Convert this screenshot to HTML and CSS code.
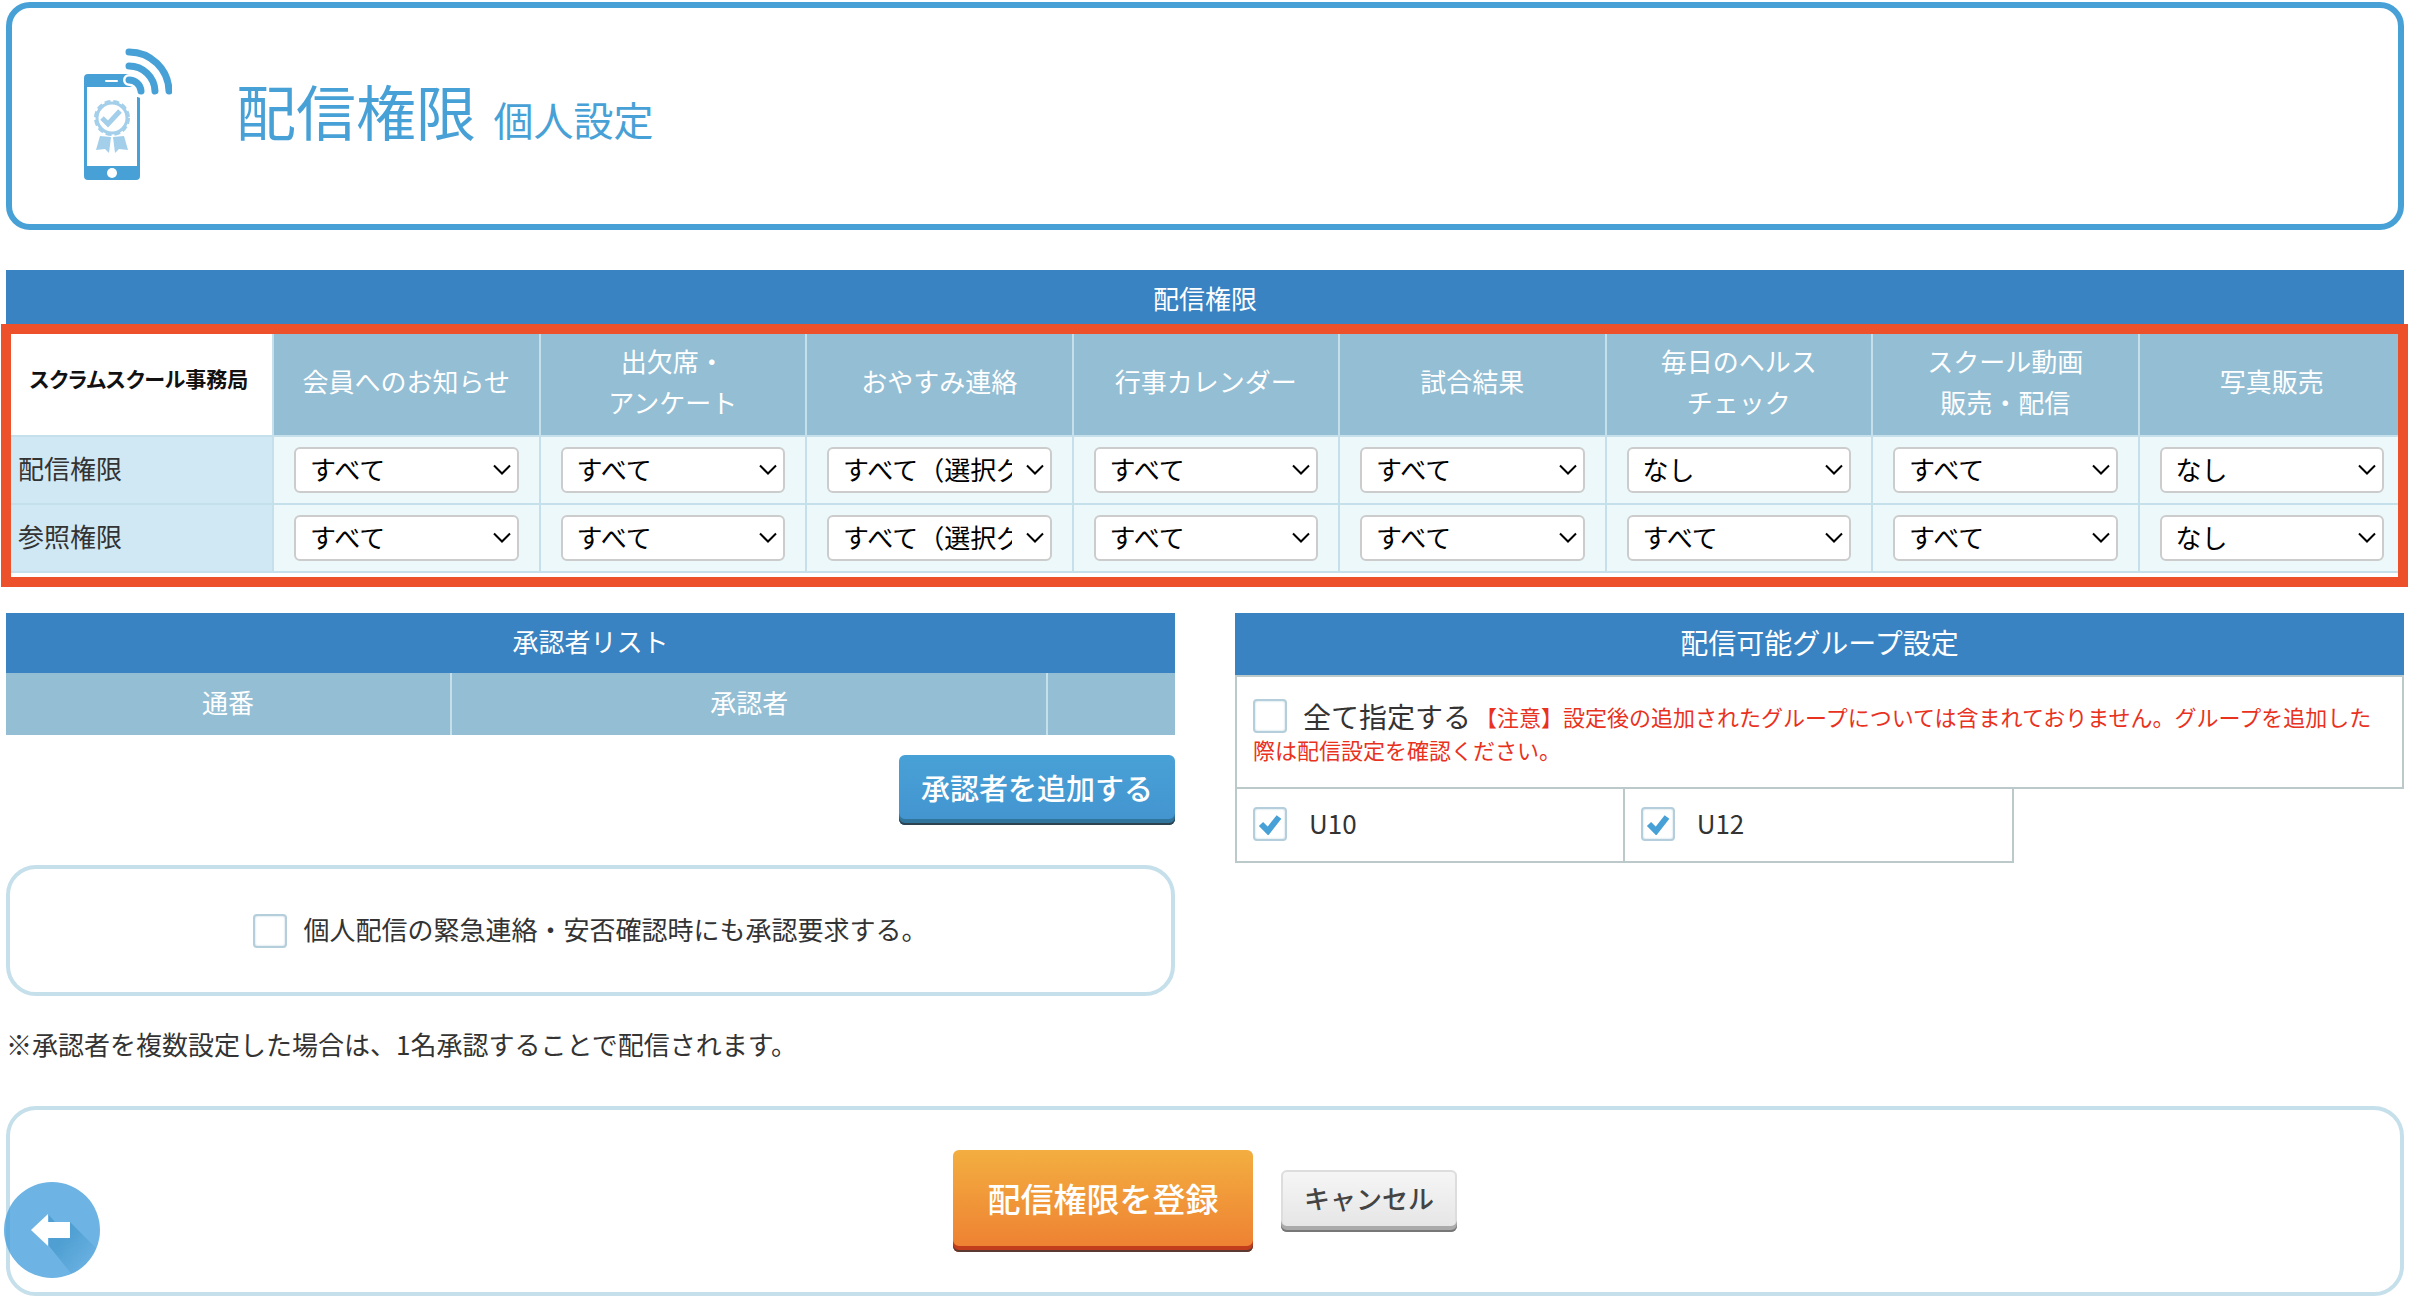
FILE: index.html
```
<!DOCTYPE html>
<html lang="ja">
<head>
<meta charset="utf-8">
<meta name="viewport" content="width=device-width, initial-scale=1">
<title>配信権限 個人設定</title>
<link rel="stylesheet" href="styles.css">
</head>
<body>
<main class="page">
  <header class="page-header">
    <svg class="page-icon" viewBox="0 0 88 132" aria-hidden="true">
      <rect x="0" y="26" width="56" height="106" rx="4" fill="#48a1d6"/>
      <rect x="3" y="39" width="50" height="79" fill="#fff"/>
      <path d="M22 33h11" stroke="#fff" stroke-width="2" stroke-linecap="round"/>
      <circle cx="28" cy="125" r="5" fill="#fff"/>
      <path d="M46 25h12v24h-9z" fill="#fff"/>
      <path d="M45 32a12 12 0 0 1 12 12" fill="none" stroke="#fff" stroke-width="12" stroke-linecap="round"/>
      <g fill="none" stroke="#48a1d6" stroke-width="7" stroke-linecap="round">
        <path d="M45 32a12 12 0 0 1 12 11"/>
        <path d="M45 18a26 26 0 0 1 26 25"/>
        <path d="M45 4a40 40 0 0 1 40 39"/>
      </g>
      <circle cx="28" cy="70" r="15" fill="none" stroke="#a3cfea" stroke-width="3"/>
      <circle cx="28" cy="70" r="17" fill="none" stroke="#a3cfea" stroke-width="2" stroke-dasharray="6 3"/>
      <path d="M18 70l6 6 12-13" fill="none" stroke="#a3cfea" stroke-width="5"/>
      <path d="M16 88l11 1-2 16-4-4-9 1zM40 88l-11 1 2 16 4-4 9 1z" fill="#a3cfea"/>
    </svg>
    <h1 class="page-title">配信権限 <span class="page-subtitle">個人設定</span></h1>
  </header>

  <section class="permissions">
    <table class="perm-table">
      <colgroup><col class="col-owner"><col span="8"></colgroup>
      <thead>
        <tr><th class="bar" colspan="9">配信権限</th></tr>
        <tr>
          <th class="owner" scope="col">スクラムスクール事務局</th>
          <th scope="col">会員へのお知らせ</th>
          <th scope="col">出欠席・<br>アンケート</th>
          <th scope="col">おやすみ連絡</th>
          <th scope="col">行事カレンダー</th>
          <th scope="col">試合結果</th>
          <th scope="col">毎日のヘルス<br>チェック</th>
          <th scope="col">スクール動画<br>販売・配信</th>
          <th scope="col">写真販売</th>
        </tr>
      </thead>
      <tbody>
        <tr>
          <th scope="row">配信権限</th>
          <td><select aria-label="配信権限 会員へのお知らせ"><option>すべて</option><option>なし</option></select></td>
          <td><select aria-label="配信権限 出欠席・アンケート"><option>すべて</option><option>なし</option></select></td>
          <td><select aria-label="配信権限 おやすみ連絡"><option>すべて（選択グループ）</option><option>なし</option></select></td>
          <td><select aria-label="配信権限 行事カレンダー"><option>すべて</option><option>なし</option></select></td>
          <td><select aria-label="配信権限 試合結果"><option>すべて</option><option>なし</option></select></td>
          <td><select aria-label="配信権限 毎日のヘルスチェック"><option>なし</option><option>すべて</option></select></td>
          <td><select aria-label="配信権限 スクール動画販売・配信"><option>すべて</option><option>なし</option></select></td>
          <td><select aria-label="配信権限 写真販売"><option>なし</option><option>すべて</option></select></td>
        </tr>
        <tr>
          <th scope="row">参照権限</th>
          <td><select aria-label="参照権限 会員へのお知らせ"><option>すべて</option><option>なし</option></select></td>
          <td><select aria-label="参照権限 出欠席・アンケート"><option>すべて</option><option>なし</option></select></td>
          <td><select aria-label="参照権限 おやすみ連絡"><option>すべて（選択グループ）</option><option>なし</option></select></td>
          <td><select aria-label="参照権限 行事カレンダー"><option>すべて</option><option>なし</option></select></td>
          <td><select aria-label="参照権限 試合結果"><option>すべて</option><option>なし</option></select></td>
          <td><select aria-label="参照権限 毎日のヘルスチェック"><option>すべて</option><option>なし</option></select></td>
          <td><select aria-label="参照権限 スクール動画販売・配信"><option>すべて</option><option>なし</option></select></td>
          <td><select aria-label="参照権限 写真販売"><option>なし</option><option>すべて</option></select></td>
        </tr>
      </tbody>
    </table>
    <div class="highlight"></div>
  </section>

  <div class="columns">
    <section class="approvers">
      <table class="approver-table">
        <colgroup><col class="col-no"><col class="col-name"><col></colgroup>
        <thead>
          <tr><th class="bar" colspan="3">承認者リスト</th></tr>
          <tr><th scope="col">通番</th><th scope="col">承認者</th><td></td></tr>
        </thead>
      </table>
      <button class="btn btn-add" type="button">承認者を追加する</button>
      <div class="panel option-panel">
        <input type="checkbox" id="urgent">
        <label for="urgent">個人配信の緊急連絡・安否確認時にも承認要求する。</label>
      </div>
      <p class="note">※承認者を複数設定した場合は、1名承認することで配信されます。</p>
    </section>

    <section class="groups">
      <table class="group-table">
        <thead>
          <tr><th class="bar" colspan="3">配信可能グループ設定</th></tr>
        </thead>
        <tbody>
          <tr>
            <td class="all-cell" colspan="3"><input type="checkbox" id="all"><label class="all-label" for="all">全て指定する</label><span class="caution">【注意】設定後の追加されたグループについては含まれておりません。グループを追加した際は配信設定を確認ください。</span></td>
          </tr>
          <tr>
            <td><div class="group-item"><input type="checkbox" id="u10" checked><label for="u10">U10</label></div></td>
            <td><div class="group-item"><input type="checkbox" id="u12" checked><label for="u12">U12</label></div></td>
          </tr>
        </tbody>
      </table>
    </section>
  </div>

  <footer class="panel actions">
    <button class="btn btn-submit" type="submit">配信権限を登録</button>
    <button class="btn btn-cancel" type="button">キャンセル</button>
  </footer>
</main>

<a class="back" href="#" aria-label="戻る">
  <svg viewBox="0 0 96 96" aria-hidden="true">
    <defs>
      <clipPath id="disc"><circle cx="48" cy="48" r="48"/></clipPath>
      <linearGradient id="shade" x1="0" y1="0" x2="1" y2="1">
        <stop offset=".3" stop-color="#4f9fd2"/>
        <stop offset=".8" stop-color="#4f9fd2" stop-opacity="0"/>
      </linearGradient>
    </defs>
    <circle cx="48" cy="48" r="48" fill="#48a0dc" fill-opacity=".8"/>
    <path d="M45 33l6 7h15l34 34-26 26-29-36z" fill="url(#shade)" clip-path="url(#disc)"/>
    <path d="M27 48l17-16v8h22v16H44v8z" fill="#fff"/>
  </svg>
</a>
</body>
</html>
```
FILE: styles.css
```
* {
  box-sizing: border-box;
}

body {
  margin: 0;
  background: #fff;
  color: #333;
  font-family: "Noto Sans CJK JP", sans-serif;
  font-size: 26px;
  line-height: 40px;
}

.page {
  padding: 2px 16px 8px 6px;
}

/* Header */
.page-header {
  display: flex;
  align-items: flex-start;
  gap: 64px;
  min-height: 228px;
  padding: 40px 72px;
  border: 6px solid #48a1d6;
  border-radius: 24px;
}

.page-icon {
  flex: none;
  width: 88px;
  height: 132px;
}

.page-title {
  margin: 0;
  padding-top: 12px;
  color: #48a1d6;
  font-size: 60px;
  font-weight: 400;
  line-height: 100px;
}

.page-subtitle {
  margin-left: 4px;
  font-size: 40px;
}

/* Tables */
table {
  width: 100%;
  border-spacing: 0;
  table-layout: fixed;
}

th,
td {
  padding: 0 0 4px;
  font-weight: 400;
}

.bar {
  height: 60px;
  background: #3983c2;
  color: #fff;
}

.permissions {
  position: relative;
  margin-top: 40px;
}

.col-owner {
  width: 266px;
}

.perm-table tr + tr th,
.perm-table td {
  border-bottom: 2px solid #c5dfeb;
}

.perm-table tr + tr th + th,
.perm-table td {
  border-left: 2px solid #c5dfeb;
}

.perm-table thead tr + tr th {
  height: 107px;
  background: #93bed4;
  color: #fff;
  line-height: 41px;
}

.perm-table thead tr + tr .owner {
  padding-bottom: 8px;
  background: #fff;
  color: #111;
  font-size: 21px;
  font-weight: 700;
  font-feature-settings: "palt";
  white-space: nowrap;
}

.perm-table tbody th {
  padding-left: 12px;
  border-bottom: 2px solid #c5dfeb;
  background: #d0e8f4;
  text-align: left;
}

.perm-table td {
  padding: 10px 20px;
  background: #ecf8fa;
}

select {
  display: block;
  width: 100%;
  height: 46px;
  padding: 0 38px 2px 14px;
  border: 2px solid #ccc;
  border-radius: 6px;
  appearance: none;
  background: #fff url("data:image/svg+xml,%3Csvg xmlns='http://www.w3.org/2000/svg' width='18' height='12'%3E%3Cpath d='M1 1.500l8 8 8-8' fill='none' stroke='%23000' stroke-width='2'/%3E%3C/svg%3E") no-repeat right 6px center;
  color: #000;
  font: inherit;
  line-height: 40px;
  text-overflow: clip;
}

/* Frame drawn over the table to call out the editable area */
.highlight {
  position: absolute;
  inset: 54px -4px -14px -5px;
  border: 10px solid #ec512c;
  pointer-events: none;
}

/* Two columns */
.columns {
  display: grid;
  grid-template-columns: 1fr 1fr;
  gap: 60px;
  margin-top: 40px;
}

.approvers {
  display: flex;
  flex-direction: column;
}

.col-no {
  width: 38%;
}

.col-name {
  width: 51%;
}

.approver-table tr + tr > * {
  height: 62px;
  background: #93bed4;
  color: #fff;
}

.approver-table th + th,
.approver-table td {
  border-left: 2px solid #c5dfeb;
}

.panel {
  display: flex;
  align-items: center;
  justify-content: center;
  border: 4px solid #c5dfeb;
  border-radius: 30px;
}

.option-panel {
  gap: 16px;
  margin-top: 40px;
  padding: 40px 16px;
}

.option-panel label,
.group-item label {
  padding-bottom: 3px;
}

.note {
  margin: 28px 0 0;
}

input[type="checkbox"] {
  flex: none;
  width: 34px;
  height: 34px;
  margin: 0;
  border: 2px solid #b4cedb;
  border-radius: 4px;
  appearance: none;
  background: #fff no-repeat center;
  box-shadow: inset 0 0 2px #b4cedb;
}

input[type="checkbox"]:checked {
  background-image: url("data:image/svg+xml,%3Csvg xmlns='http://www.w3.org/2000/svg' width='24' height='22'%3E%3Cpath d='M3 11l7 7L21 4' fill='none' stroke='%2348a1d6' stroke-width='6'/%3E%3C/svg%3E");
}

/* Groups */
.group-table .bar {
  height: 62px;
  font-size: 28px;
}

.group-table td {
  padding: 0;
  border: solid #bcc9ca;
  border-width: 0 2px 2px 0;
}

.group-table td:first-child {
  border-left-width: 2px;
}

.group-table .all-cell {
  height: 114px;
  padding: 22px 16px 18px;
  border-top-width: 2px;
  font-size: 22px;
  line-height: 24px;
  vertical-align: top;
}

.all-cell input {
  margin-right: 16px;
  vertical-align: middle;
}

.all-label {
  margin-right: 4px;
  font-size: 28px;
  vertical-align: middle;
}

.caution {
  color: #e8321e;
  vertical-align: middle;
}

.group-item {
  display: flex;
  align-items: center;
  gap: 22px;
  height: 72px;
  padding: 0 16px 2px;
}

/* Buttons */
.btn {
  border: 0;
  border-radius: 6px;
  color: #fff;
  font-family: inherit;
  font-weight: 500;
  line-height: 40px;
}

.btn-add {
  align-self: flex-end;
  width: 276px;
  height: 70px;
  margin-top: 20px;
  padding: 0 0 6px;
  background: linear-gradient(#48a1d6, #4394d0);
  box-shadow: inset 0 -2px #2d4450, inset 0 -6px #31749c;
  font-size: 29px;
}

.actions {
  gap: 28px;
  margin-top: 42px;
  padding: 40px 16px;
}

.btn-submit {
  width: 300px;
  height: 102px;
  padding: 0 0 6px;
  background: linear-gradient(#f3ae40, #ee7f32);
  box-shadow: inset 0 -2px #5c3a34, inset 0 -6px #c23d1c;
  font-size: 33px;
}

.btn-cancel {
  width: 176px;
  height: 62px;
  padding: 0 0 6px;
  background: linear-gradient(#f6f6f6, #e4e4e4);
  box-shadow: inset 0 -2px #777, inset 0 -6px #aaa, inset 0 0 0 2px #ddd;
  color: #444;
  font-size: 26px;
}

.back {
  position: fixed;
  bottom: 30px;
  left: 4px;
  width: 96px;
  height: 96px;
}

.back svg {
  display: block;
}
```
